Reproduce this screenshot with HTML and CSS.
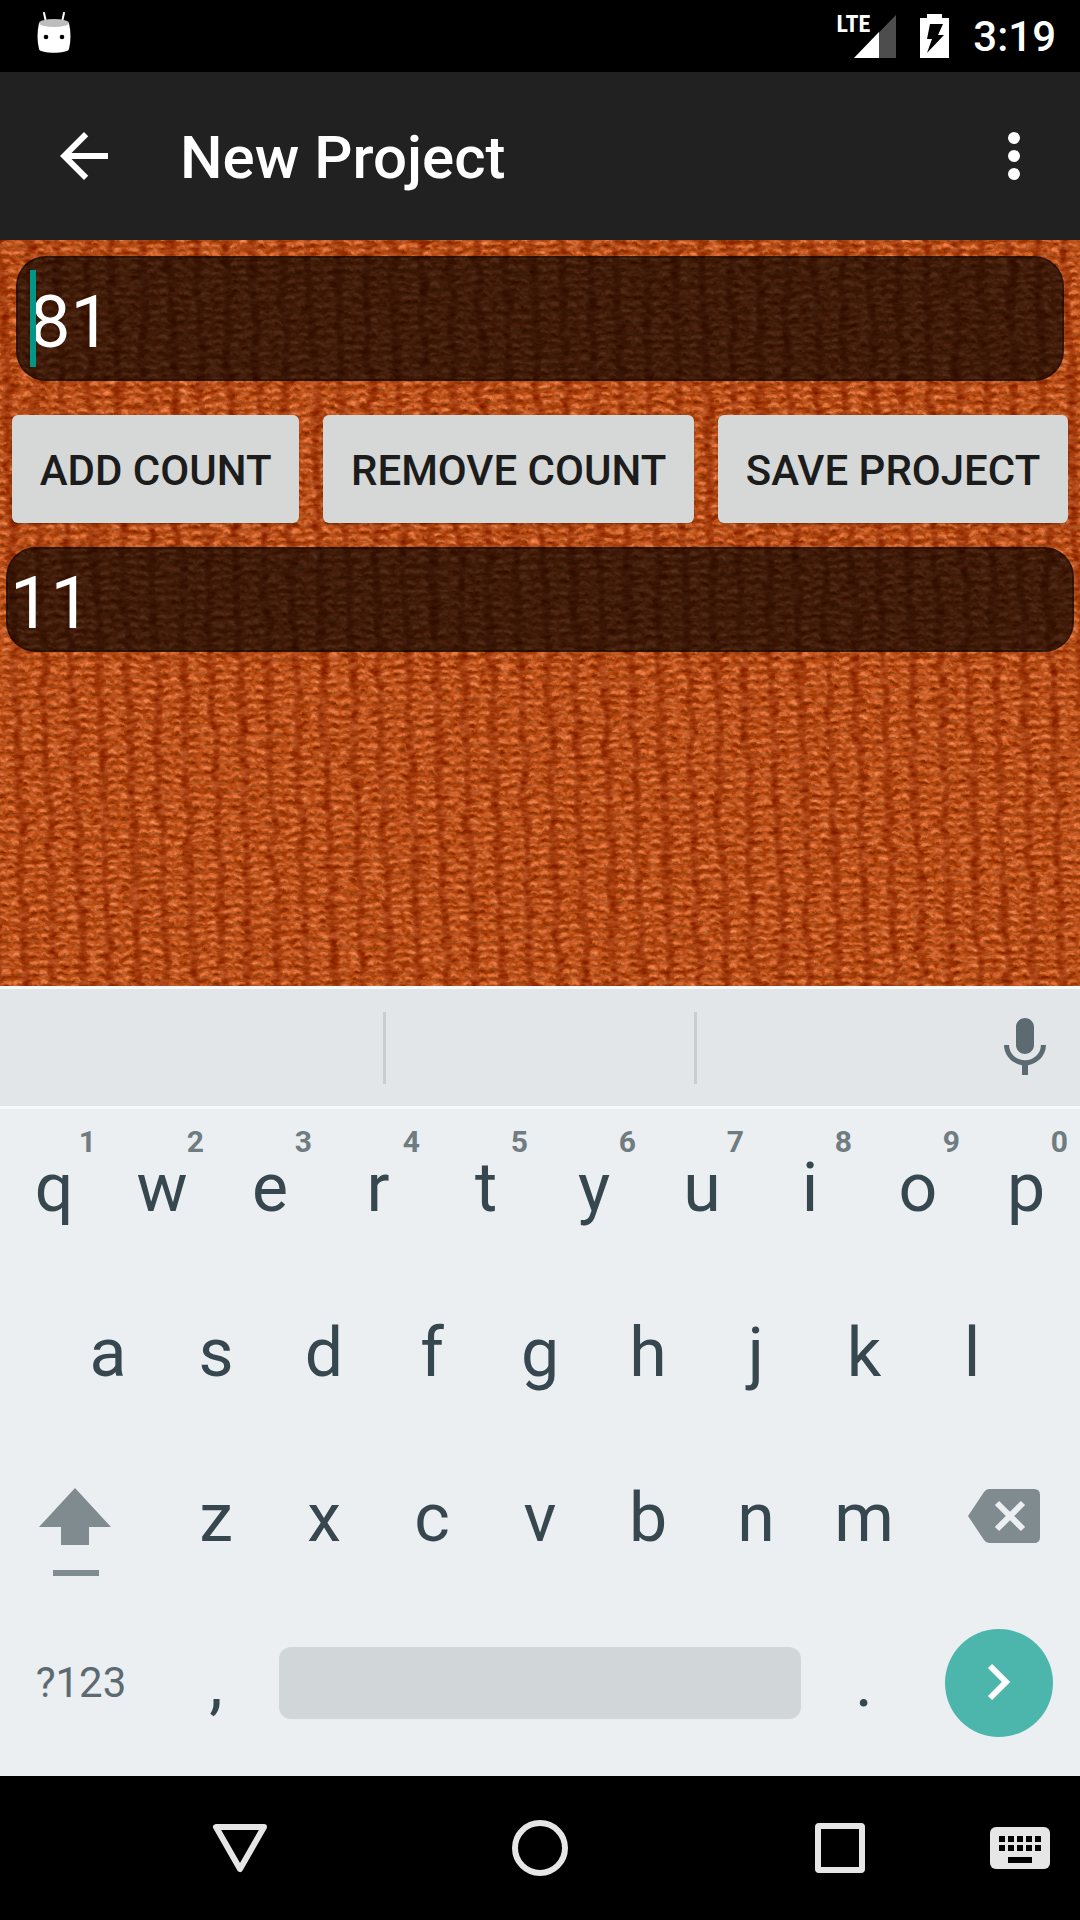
FILE: index.html
```html
<!DOCTYPE html>
<html lang="en">
<head>
<meta charset="utf-8">
<meta name="viewport" content="width=device-width, initial-scale=1">
<title>New Project</title>
<link rel="stylesheet" href="styles.css">
</head>
<body>
<div class="screen">
  <div class="status-bar">
    <svg class="status-logo" width="34" height="42" viewBox="0 0 34 42" aria-hidden="true">
      <path d="M7 1l2 9M27 1l-2 9" stroke="#fff" stroke-width="2" stroke-linecap="round"/>
      <path d="M2 11C0 20 0 29 2 37c1 5 29 5 30 0 2-8 2-17 0-26z" fill="#fff"/>
      <ellipse cx="17" cy="11" rx="15" ry="4" fill="#bdbdbd"/>
      <circle cx="9" cy="25" r="2.3"/><circle cx="25" cy="25" r="2.3"/>
    </svg>
    <div class="status-icons">
      <div class="signal">
        <svg width="42" height="43" viewBox="0 0 42 43" aria-hidden="true">
          <path d="M42 0v43H0z" fill="#4d4d4d"/><path d="M25 17v26H0z" fill="#fff"/>
        </svg>
        <span class="network">LTE</span>
      </div>
      <svg width="29" height="44" viewBox="0 0 29 44" aria-hidden="true">
        <path d="M7 0h15v4h7v40H0V4h7z" fill="#fff"/>
        <path d="M10 10h13l-5 11h6L7 39l5-14H7z"/>
      </svg>
      <time class="clock">3:19</time>
    </div>
  </div>

  <header class="app-bar">
    <button class="icon-button" type="button" aria-label="Back">
      <svg width="72" height="72" viewBox="0 0 24 24"><path fill="#fff" d="M20 11H7.83l5.59-5.59L12 4l-8 8 8 8 1.410-1.410L7.830 13H20v-2z"/></svg>
    </button>
    <h1 class="title">New Project</h1>
    <button class="icon-button" type="button" aria-label="More options">
      <svg width="72" height="72" viewBox="0 0 24 24"><path fill="#fff" d="M12 8a2 2 0 1 0 0-4 2 2 0 0 0 0 4zm0 2a2 2 0 1 0 0 4 2 2 0 0 0 0-4zm0 6a2 2 0 1 0 0 4 2 2 0 0 0 0-4z"/></svg>
    </button>
  </header>

  <main class="content">
    <svg class="fabric" width="100%" height="100%" aria-hidden="true">
      <defs>
        <linearGradient id="rib" x1="0" x2="1" y1="0" y2="0">
          <stop offset="0" stop-color="#9c370a"/><stop offset=".22" stop-color="#b04512"/>
          <stop offset=".5" stop-color="#b94d18"/><stop offset=".82" stop-color="#b54915"/>
          <stop offset="1" stop-color="#9c370a"/>
        </linearGradient>
        <pattern id="knit" width="28" height="9" patternUnits="userSpaceOnUse" patternTransform="rotate(-2)">
          <rect width="28" height="9" fill="url(#rib)"/>
          <path d="M6 8q4-2 7 0M17 8q4-2 7 1" stroke="#94400f" stroke-width="2" fill="none"/>
          <path d="M6 4q3-2 6 1M17 4q3-2 6 1" stroke="#d66830" stroke-width="3" stroke-linecap="round" fill="none"/>
        </pattern>
        <filter id="yarn" x="0" y="0" width="100%" height="100%" color-interpolation-filters="sRGB">
          <feTurbulence type="fractalNoise" baseFrequency=".03 .03" numOctaves="3" seed="4" result="warp"/>
          <feDisplacementMap in="SourceGraphic" in2="warp" scale="14" xChannelSelector="R" yChannelSelector="G" result="knitted"/>
          <feTurbulence type="fractalNoise" baseFrequency=".1 .2" numOctaves="3" seed="9"/>
          <feColorMatrix values="1.2 0 0 0 -.1  1.2 0 0 0 -.1  1.2 0 0 0 -.1  0 0 0 0 1" result="fuzz"/>
          <feComposite in="knitted" in2="fuzz" operator="arithmetic" k1="0" k2="1" k3=".32" k4="-.16"/>
        </filter>
      </defs>
      <rect x="-20" y="-20" width="110%" height="110%" fill="url(#knit)" filter="url(#yarn)"/>
    </svg>
    <div class="field">
      <input class="project-name" type="text" value="81" aria-label="Project name">
      <span class="caret"></span>
    </div>
    <div class="actions">
      <button class="action" type="button">ADD COUNT</button>
      <button class="action" type="button">REMOVE COUNT</button>
      <button class="action" type="button">SAVE PROJECT</button>
    </div>
    <div class="count">11</div>
  </main>

  <section class="keyboard" aria-label="Keyboard">
    <div class="suggestions">
      <span class="suggestion"></span><span class="suggestion middle"></span>
      <span class="suggestion last">
        <button class="icon-button" type="button" aria-label="Voice input">
          <svg width="72" height="72" viewBox="0 0 24 24"><path fill="#5c6b72" d="M12 14c1.660 0 3-1.340 3-3V5c0-1.660-1.340-3-3-3S9 3.340 9 5v6c0 1.660 1.340 3 3 3zm5.300-3c0 3-2.540 5.100-5.300 5.100S6.700 14 6.700 11H5c0 3.410 2.720 6.230 6 6.720V21h2v-3.280c3.280-.48 6-3.300 6-6.720h-1.700z"/></svg>
        </button>
      </span>
    </div>
    <div class="keys">
      <div class="row">
        <button class="key">q<span class="hint">1</span></button><button class="key">w<span class="hint">2</span></button><button class="key">e<span class="hint">3</span></button><button class="key">r<span class="hint">4</span></button><button class="key">t<span class="hint">5</span></button><button class="key">y<span class="hint">6</span></button><button class="key">u<span class="hint">7</span></button><button class="key">i<span class="hint">8</span></button><button class="key">o<span class="hint">9</span></button><button class="key">p<span class="hint">0</span></button>
      </div>
      <div class="row inset">
        <button class="key">a</button><button class="key">s</button><button class="key">d</button><button class="key">f</button><button class="key">g</button><button class="key">h</button><button class="key">j</button><button class="key">k</button><button class="key">l</button>
      </div>
      <div class="row">
        <button class="key wide" aria-label="Shift">
          <svg class="shift" width="72" height="120" viewBox="0 0 72 120"><path fill="#808b8f" d="M36 30l36 39H50v18H22V69H0zM14 112h46v6H14z"/></svg>
        </button>
        <button class="key">z</button><button class="key">x</button><button class="key">c</button><button class="key">v</button><button class="key">b</button><button class="key">n</button><button class="key">m</button>
        <button class="key wide" aria-label="Delete">
          <svg class="delete" width="72" height="54" viewBox="0 0 72 54"><path fill="#808b8f" d="M21 0h45q6 0 6 6v42q0 6-6 6H21q-3 0-5-3L0 27 16 3q2-3 5-3z"/><path d="M29 14l26 26M55 14L29 40" stroke="#eceff1" stroke-width="6"/></svg>
        </button>
      </div>
      <div class="row">
        <button class="key wide symbols">?123</button>
        <button class="key">,</button>
        <button class="key space" aria-label="Space"><span class="space-bar"></span></button>
        <button class="key">.</button>
        <button class="key wide" aria-label="Next">
          <svg width="108" height="108" viewBox="0 0 108 108"><circle cx="54" cy="54" r="54" fill="#4db6ac"/><path d="M45 37l16 16-16 16" fill="none" stroke="#fff" stroke-width="6"/></svg>
        </button>
      </div>
    </div>
  </section>

  <nav class="nav-bar" aria-label="System">
    <button class="nav-button" type="button" aria-label="Hide keyboard">
      <svg width="56" height="56" viewBox="0 0 56 56"><path d="M4 7h48L28 49z" fill="none" stroke="#e6e6e6" stroke-width="6" stroke-linejoin="round"/></svg>
    </button>
    <button class="nav-button" type="button" aria-label="Home">
      <svg width="56" height="56" viewBox="0 0 56 56"><circle cx="28" cy="28" r="25" fill="none" stroke="#e6e6e6" stroke-width="6"/></svg>
    </button>
    <button class="nav-button" type="button" aria-label="Recent apps">
      <svg width="56" height="56" viewBox="0 0 56 56"><rect x="6" y="6" width="44" height="44" rx="1" fill="none" stroke="#e6e6e6" stroke-width="6"/></svg>
    </button>
    <button class="nav-button end" type="button" aria-label="Switch keyboard">
      <svg width="60" height="42" viewBox="0 0 60 42"><rect width="60" height="42" rx="6" fill="#e6e6e6"/><path d="M9 9h6v6H9zm9 0h6v6h-6zm9 0h6v6h-6zm9 0h6v6h-6zm9 0h6v6h-6zM9 18h6v6H9zm9 0h6v6h-6zm9 0h6v6h-6zm9 0h6v6h-6zm9 0h6v6h-6zM18 30h24v6H18z"/></svg>
    </button>
  </nav>
</div>
</body>
</html>
```
FILE: styles.css
```css
* { box-sizing: border-box; }
body { margin: 0; font-family: Roboto, "Noto Sans", sans-serif; }
button { margin: 0; padding: 0; border: 0; background: none; font: inherit; color: inherit; }
svg { display: block; }

.screen { display: flex; flex-direction: column; min-height: 100vh; background: #000; }

.status-bar {
  display: flex; justify-content: space-between; align-items: center;
  height: 72px; padding: 0 24px 0 37px; color: #fff;
}
.status-logo { margin-bottom: 6px; }
.status-icons { display: flex; align-items: center; gap: 24px; }
.signal { position: relative; }
.network {
  position: absolute; right: 26px; top: -3px;
  font: bold 24px/24px "Roboto Condensed", "Liberation Sans Narrow", Roboto, sans-serif;
}
.clock { font-size: 42px; line-height: 48px; font-weight: 500; padding-top: 2px; }

.app-bar {
  display: flex; align-items: center;
  height: 168px; padding: 0 30px 0 48px; background: #212121; color: #fff;
}
.icon-button { flex: none; }
.title { flex: 1; margin: 4px 0 0 60px; font-size: 60px; line-height: 72px; font-weight: 500; }

.content { position: relative; flex: 1; background: #b84c14; overflow: hidden; }
.fabric { position: absolute; top: 0; left: 0; }
.field, .actions, .count { position: relative; }
.field { margin: 16px 16px 0; }
.project-name, .count {
  display: block; width: 100%; border: 2px solid rgba(0, 0, 0, .3); border-radius: 30px;
  background: rgba(0, 0, 0, .65); color: #fff; font: 72px/84px Roboto, sans-serif;
}
.project-name { height: 125px; padding: 8px 12px 0; outline: 0; }
.caret { position: absolute; left: 14px; top: 14px; width: 6px; height: 97px; background: #009688; }
.actions { display: flex; gap: 24px; margin: 34px 12px 24px; }
.action {
  flex: 1 1 auto; height: 108px; padding-top: 2px; border-radius: 6px; background: #d6d8d7; color: #1b1c1b;
  font-size: 42px; font-weight: 500; box-shadow: 0 1px 2px rgba(0, 0, 0, .3);
}
.count { width: auto; margin: 0 6px; padding: 13px 2px 4px; }

.keyboard { background: #eceff1; color: #37474f; }
.suggestions {
  display: grid; grid-template-columns: 384fr 312fr 384fr; align-items: center;
  height: 123px; border: solid #f6f8f9; border-width: 3px 0; background: #e2e6e9;
}
.suggestion { height: 72px; }
.middle { border: solid #c8cdd0; border-width: 0 3px; margin: 0 -1px; }
.last { display: flex; justify-content: flex-end; padding-right: 19px; }
.keys { display: flex; flex-direction: column; gap: 8px; padding-bottom: 15px; }
.row { display: flex; height: 157px; }
.inset { padding: 0 5%; }
.key {
  position: relative; flex: 108 1 0; display: flex; align-items: center; justify-content: center;
  font-size: 68px; line-height: 80px;
}
.wide { flex-grow: 162; }
.hint { position: absolute; right: 12px; top: 15px; font-size: 30px; line-height: 36px; font-weight: bold; color: #6f7c82; }
.shift { margin-right: 12px; }
.delete { margin: 0 0 4px 10px; }
.symbols { font-size: 42px; color: #5c6b72; }
.space { flex-grow: 540; }
.space-bar { flex: 1; height: 72px; margin: 0 9px; border-radius: 12px; background: #d1d6d9; }

.nav-bar { display: grid; grid-template-columns: 1fr 1fr 1fr 90px; height: 144px; padding-left: 90px; }
.nav-button { display: flex; align-items: center; justify-content: center; }
.end { justify-content: flex-start; }
```
